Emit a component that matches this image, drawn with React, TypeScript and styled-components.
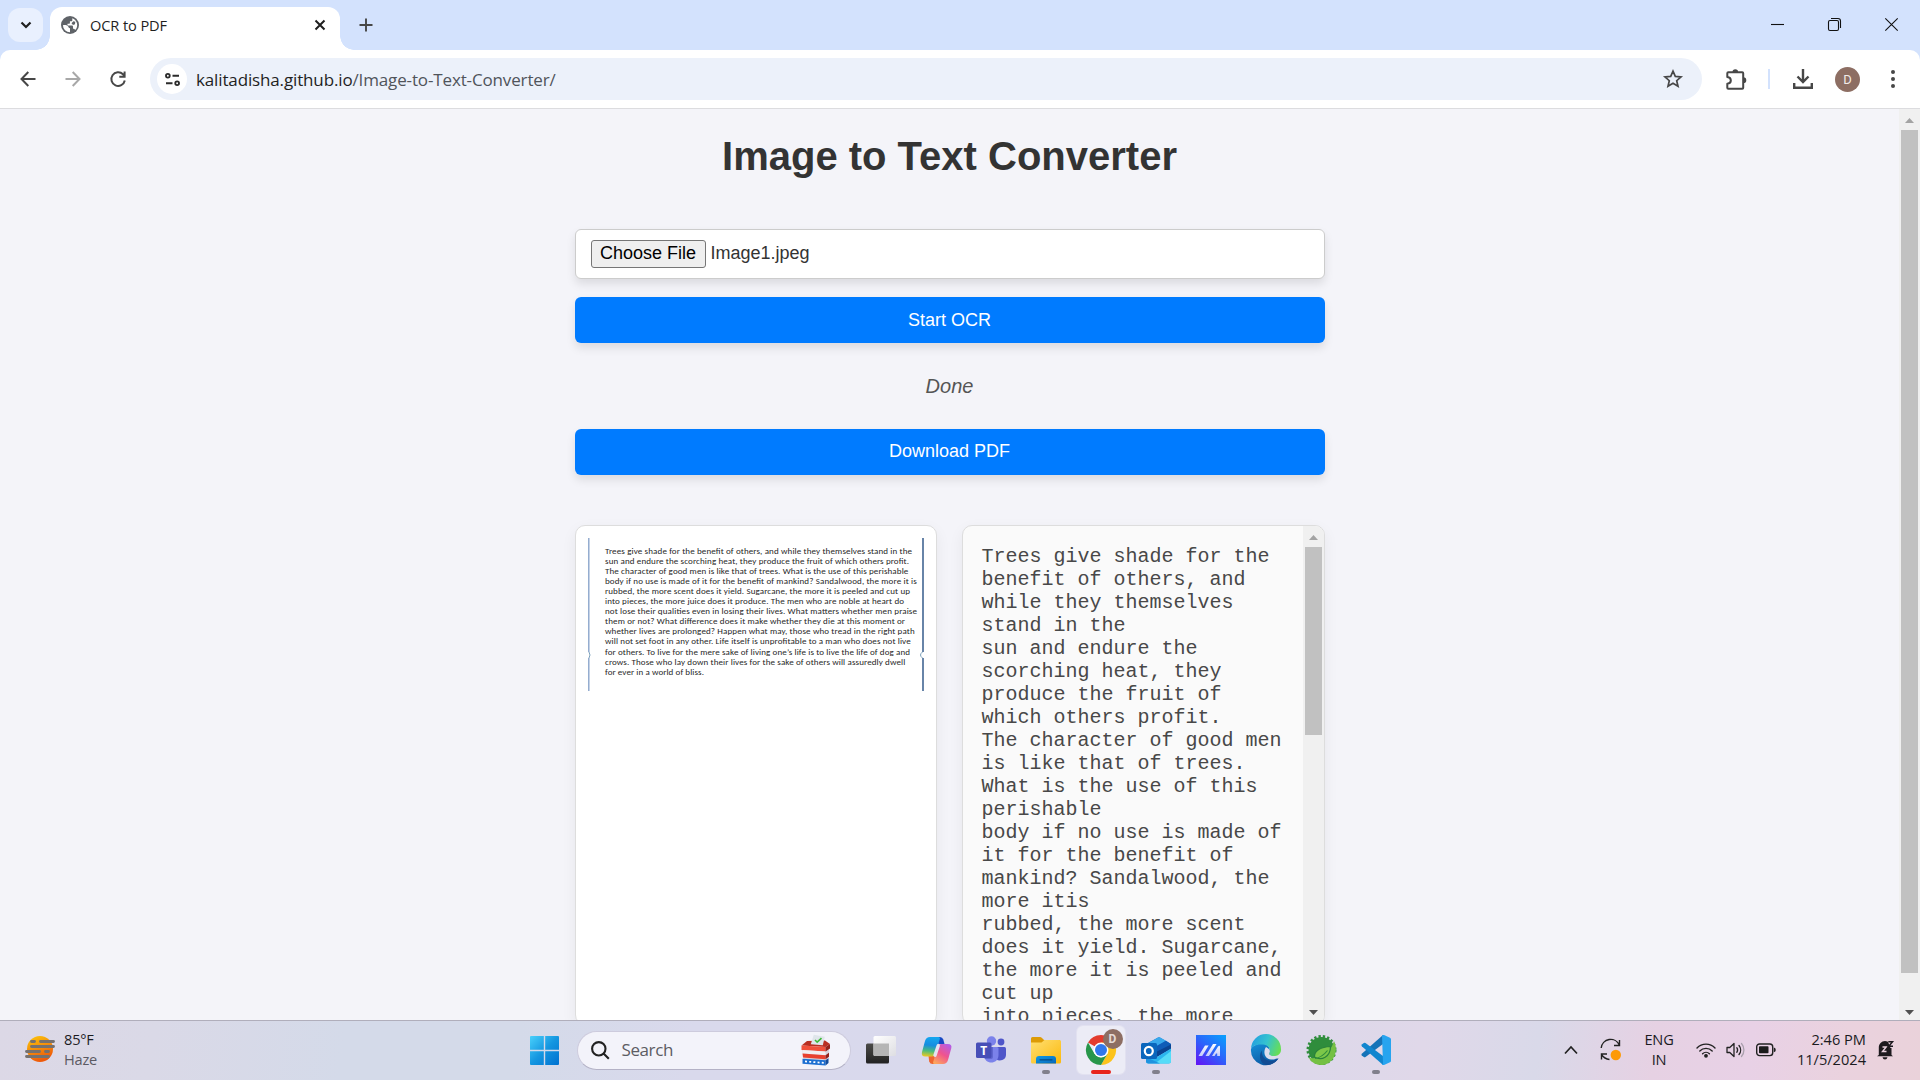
import React from 'react';
import styled, { createGlobalStyle } from 'styled-components';

const UI = `"Open Sans", "Noto Sans", sans-serif`;
const SANS = `"Liberation Sans", Arial, sans-serif`;

const GlobalStyle = createGlobalStyle`
  * { box-sizing: border-box; }
  body { margin: 0; overflow: hidden; background: #f4f4f9; }
  svg { display: block; flex: none; overflow: visible; }
`;

const Screen = styled.div`
  width: 1920px;
  height: 1080px;
  display: flex;
  flex-direction: column;
  overflow: hidden;
  background: #f4f4f9;
`;

/* ---------- browser chrome ---------- */
const TabStrip = styled.header`
  height: 50px;
  flex: none;
  display: flex;
  background: #d3e2fd;
`;
const TabSearch = styled.div`
  width: 35px;
  height: 34px;
  margin: 8px 0 0 8px;
  border-radius: 12px;
  background: #e9f0fe;
  display: grid;
  place-items: center;
`;
const Tab = styled.div`
  position: relative;
  width: 290px;
  height: 43px;
  margin: 7px 0 0 7px;
  padding: 0 12px 7px 11px;
  border-radius: 12px 12px 0 0;
  background: #fff;
  display: flex;
  align-items: center;
  &::before, &::after {
    content: '';
    position: absolute;
    bottom: 0;
    width: 14px;
    height: 14px;
  }
  &::before { left: -14px; background: radial-gradient(circle at 0 0, transparent 13.5px, #fff 14px); }
  &::after { right: -14px; background: radial-gradient(circle at 100% 0, transparent 13.5px, #fff 14px); }
`;
const TabTitle = styled.span`
  flex: 1;
  margin-left: 11px;
  font: 14.6px/20px ${UI};
  letter-spacing: -0.1px;
  color: #1f1f1f;
`;
const NewTab = styled.div`
  width: 51px;
  height: 50px;
  display: grid;
  place-items: center;
`;
const WindowButtons = styled.div`
  margin-left: auto;
  display: flex;
`;
const WindowButton = styled.div`
  width: 57px;
  height: 49px;
  display: grid;
  place-items: center;
`;
const ToolbarBack = styled.div`
  flex: none;
  background: #d3e2fd;
`;
const Toolbar = styled.nav`
  height: 59px;
  padding: 0 5px;
  display: flex;
  align-items: center;
  background: #fff;
  border-bottom: 1px solid #dcdcdf;
  border-radius: 10px 10px 0 0;
`;
const ToolSlot = styled.div`
  width: 45px;
  height: 45px;
  flex: none;
  display: grid;
  place-items: center;
`;
const Omnibox = styled.div`
  flex: 1;
  height: 42px;
  margin: 0 11.5px 0 10px;
  padding: 0 7px;
  border-radius: 21px;
  background: #ecf1fa;
  display: flex;
  align-items: center;
`;
const SiteInfo = styled.div`
  width: 30px;
  height: 30px;
  border-radius: 50%;
  background: #fff;
  display: grid;
  place-items: center;
`;
const Url = styled.span`
  flex: 1;
  margin-left: 9px;
  padding-top: 1px;
  font: 17px/24px ${UI};
  letter-spacing: -0.14px;
  color: #1f1f1f;
  span { color: #50545a; }
`;
const ToolDivider = styled.div`
  width: 2px;
  height: 20px;
  margin: 0 10px 0 9.5px;
  background: #d3e2fd;
`;
const Avatar = styled.div`
  width: 25px;
  height: 25px;
  border-radius: 50%;
  background: #8d6e63;
  color: #f2ebe8;
  font: 13px/25px Roboto, sans-serif;
  text-align: center;
`;

/* ---------- page ---------- */
const Viewport = styled.div`
  height: 911px;
  flex: none;
  display: flex;
  overflow: hidden;
`;
const Page = styled.main`
  flex: 1;
  display: flex;
  flex-direction: column;
  align-items: center;
  font-family: ${SANS};
`;
const Column = styled.div`
  width: 750px;
  display: flex;
  flex-direction: column;
`;
const Title = styled.h1`
  margin: 24px 0 50px;
  font: bold 40px/46px ${SANS};
  color: #333;
  text-align: center;
`;
const FileField = styled.div`
  height: 50px;
  margin-bottom: 18px;
  padding: 0 15px;
  display: flex;
  align-items: center;
  gap: 5px;
  background: #fff;
  border: 1px solid #ccc;
  border-radius: 6px;
  box-shadow: 0 5px 10px rgba(0, 0, 0, 0.1);
  font: 18px/20px ${SANS};
  color: #333;
`;
const ChooseFile = styled.span`
  height: 28px;
  width: 115px;
  line-height: 25px;
  text-align: center;
  background: #efefef;
  border: 1px solid #767676;
  border-radius: 3px;
  color: #000;
`;
const FileName = styled.span`
  line-height: 21px;
  padding-bottom: 1px;
`;
const PrimaryButton = styled.button`
  height: 46px;
  padding: 1px 0 0;
  border: 0;
  border-radius: 6px;
  background: #007bff;
  color: #fff;
  font: 18px/21px ${SANS};
  box-shadow: 0 5px 10px rgba(0, 0, 0, 0.1);
`;
const DownloadButton = styled(PrimaryButton)`
  padding: 0 0 1px;
`;
const Status = styled.p`
  margin: 31px 0;
  font: italic 20px/24px ${SANS};
  color: #555;
  text-align: center;
`;
const Panels = styled.section`
  margin-top: 50px;
  display: flex;
  justify-content: space-between;
`;
const Panel = styled.div<{ $bg: string; $w: number }>`
  width: ${p => p.$w}px;
  height: 500px;
  display: flex;
  overflow: hidden;
  background: ${p => p.$bg};
  border: 1px solid #ddd;
  border-radius: 10px;
  box-shadow: 0 5px 15px rgba(0, 0, 0, 0.06);
`;
const Picture = styled.div`
  padding: 12px;
`;
const OcrText = styled.pre`
  flex: 1;
  margin: 0;
  padding: 19px 0 0 19px;
  font: 20px/23px "Liberation Mono", monospace;
  color: #484848;
`;
const Bar = styled.div<{ $w: number; $h: number }>`
  width: ${p => p.$w}px;
  height: ${p => p.$h}px;
  flex: none;
  display: flex;
  flex-direction: column;
  align-items: center;
  background: #f0f0f0;
`;
const ArrowBox = styled.div<{ $end?: boolean }>`
  height: 21px;
  display: grid;
  place-items: center;
  margin-top: ${p => (p.$end ? 'auto' : '0')};
  padding-top: 2px;
`;
const Thumb = styled.div<{ $h: number }>`
  width: 17px;
  height: ${p => p.$h}px;
  background: #c1c1c1;
`;

/* ---------- taskbar ---------- */
const Taskbar = styled.footer`
  height: 60px;
  flex: none;
  display: flex;
  align-items: center;
  padding-bottom: 1px;
  border-top: 1px solid #b0aebb;
  background: linear-gradient(97deg, #dcd8e6 0%, #dad9e7 8%, #d4dae9 18%, #d4dae9 27%, #d9d9ec 36%, #d9d9ed 58%, #ddd8ea 68%, #e0d8e9 74%, #d9d9e9 80%, #e6d1e3 86%, #e8d1e6 91%, #ead2de 96%, #ead2da 100%);
  font: 14.6px/20px ${UI};
  color: #1b1b1f;
`;
const Weather = styled.div`
  width: 526px;
  padding-left: 25px;
  display: flex;
  align-items: center;
  gap: 9px;
`;
const Stack = styled.div<{ $align?: string; $gap?: string }>`
  display: flex;
  flex-direction: column;
  padding-bottom: 2px;
  text-align: ${p => p.$align || 'left'};
  letter-spacing: ${p => p.$gap || '-0.2px'};
  white-space: nowrap;
`;
const Muted = styled.span`
  color: #5b5a63;
`;
const StartSlot = styled.div`
  width: 50.5px;
  padding-left: 4px;
`;
const SearchBox = styled.div`
  width: 274px;
  height: 39px;
  padding: 0 19px 0 13px;
  display: flex;
  align-items: center;
  background: #f3f3fa;
  border: 1px solid #cdcbdd;
  border-bottom-color: #b4b2c6;
  border-radius: 20px;
`;
const SearchLabel = styled.span`
  flex: 1;
  margin-left: 12px;
  font: 17px/22px ${UI};
  letter-spacing: -0.4px;
  color: #5c5c63;
`;
const Apps = styled.div`
  margin-left: 3px;
  display: flex;
`;
const AppSlot = styled.div`
  width: 55px;
  height: 58px;
  display: grid;
  place-items: center;
  position: relative;
`;
const AppTile = styled.div<{ $active?: boolean }>`
  width: 48px;
  height: 48px;
  border-radius: 6px;
  display: grid;
  place-items: center;
  background: ${p => (p.$active ? '#ececf6' : 'transparent')};
  box-shadow: ${p => (p.$active ? '0 0 0 1px #e2e1f0' : 'none')};
`;
const Indicator = styled.div<{ $active?: boolean }>`
  position: absolute;
  bottom: 5px;
  left: 50%;
  transform: translateX(-50%);
  width: ${p => (p.$active ? 20 : 8)}px;
  height: 4px;
  border-radius: 2px;
  background: ${p => (p.$active ? '#e8251c' : '#81808c')};
`;
const ProfileBadge = styled.div`
  position: absolute;
  left: 29px;
  top: 8px;
  width: 20px;
  height: 20px;
  border-radius: 50%;
  background: #8d6e63;
  color: #e4d9d5;
  font: bold 12px/20px Roboto, sans-serif;
  text-align: center;
`;
const Tray = styled.div`
  margin-left: auto;
  padding-right: 25px;
  display: flex;
  align-items: center;
`;
const TrayItem = styled.div<{ $w: number }>`
  width: ${p => p.$w}px;
  display: flex;
  justify-content: center;
`;
const Clock = styled.div`
  width: 83px;
  padding-right: 2px;
  display: flex;
  justify-content: flex-end;
`;
const BellSlot = styled.div`
  width: 27px;
  padding-left: 9px;
`;

const imageLines: [string, number][] = [
  ['Trees give shade for the benefit of others, and while they themselves stand in the', 307],
  ['sun and endure the scorching heat, they produce the fruit of which others profit.', 304],
  ['The character of good men is like that of trees. What is the use of this perishable', 303.3],
  ['body if no use is made of it for the benefit of mankind? Sandalwood, the more it is', 311.7],
  ['rubbed, the more scent does it yield. Sugarcane, the more it is peeled and cut up', 305],
  ['into pieces, the more juice does it produce. The men who are noble at heart do', 299],
  ['not lose their qualities even in losing their lives. What matters whether men praise', 312],
  ['them or not? What difference does it make whether they die at this moment or', 300],
  ['whether lives are prolonged? Happen what may, those who tread in the right path', 309.7],
  ['will not set foot in any other. Life itself is unprofitable to a man who does not live', 305.7],
  ['for others. To live for the mere sake of living one’s life is to live the life of dog and', 305],
  ['crows. Those who lay down their lives for the sake of others will assuredly dwell', 300.3],
  ['for ever in a world of bliss.', 99],
];

const ocr = `Trees give shade for the
benefit of others, and
while they themselves
stand in the
sun and endure the
scorching heat, they
produce the fruit of
which others profit.
The character of good men
is like that of trees.
What is the use of this
perishable
body if no use is made of
it for the benefit of
mankind? Sandalwood, the
more itis
rubbed, the more scent
does it yield. Sugarcane,
the more it is peeled and
cut up
into pieces, the more`;

const SourceImage = () => (
  <svg width="336" height="154" viewBox="0 0 336 154">
    <path d="M.8 0v114M.8 120v33" stroke="#8aa5cb" strokeWidth="1.4" />
    <path d="M335 0v114M335 120v33" stroke="#57779f" strokeWidth="1.8" />
    <path d="M1 114q2 3 0 6M334.500 114q-4 3 0 6" fill="none" stroke="#7ba0bb" strokeWidth="1" />
    <g fontFamily="Carlito, Lato, sans-serif" fontSize="9" fill="#262626">
      {imageLines.map(([t, w], i) => (
        <text key={i} x="17" y={16.2 + i * 10.03} textLength={w}>{t}</text>
      ))}
    </g>
  </svg>
);

const Arrow = ({ down, color }: { down?: boolean; color: string }) => (
  <svg width="9" height="5" viewBox={down ? '0 -2 9 5' : '0 0 9 5'}><path d={down ? 'M0 0h9L4.500 5z' : 'M0 5h9L4.500 0z'} fill={color} /></svg>
);

const Stroke = ({ size, d, color = '#474747', w = 2 }: { size: number; d: string; color?: string; w?: number }) => (
  <svg width={size} height={size} viewBox={`0 0 ${size} ${size}`} fill="none" stroke={color} strokeWidth={w}><path d={d} /></svg>
);

const Globe = () => (
  <svg width="18" height="18" viewBox="0 0 18 18">
    <circle cx="9" cy="9" r="9" fill="#5f6368" />
    <path d="M1.900 9.200C4 8.800 5.800 9 7 10.200c.9 1 .6 2 2 2.100v3.900A7.200 7.200 0 0 1 1.900 9.200z" fill="#fff" />
    <path d="M11.300 2.200A7.200 7.200 0 0 1 14.200 14c-.4-1-1.200-1.300-2.200-1.300V10.800c0-.9-.5-1.300-1.300-1.300H6.500V7.700h1.400c.7 0 1-.4 1-1V5.200h1.400c.7 0 1-.4 1-1z" fill="#fff" />
    <path d="M12.300 5.300l2 .5-.3 2.500-2 .7-1.500-1.800z" fill="#5f6368" />
  </svg>
);

const Puzzle = () => (
  <svg width="24" height="24" viewBox="0 0 24 24">
    <path d="M4.800 5.200h13.400q1 0 1 1v14.500q0 1-1 1H4.300q-1 0-1-1v-3.900c4.700-.6 4.700-6.100 0-6.700V6.200q0-1 1-1z" fill="none" stroke="#474747" strokeWidth="2" strokeLinejoin="round" />
    <path d="M8.500 5a2.800 2.800 0 0 1 5.600 0zM19.400 10.300a2.900 2.900 0 0 1 0 5.800z" fill="#474747" />
  </svg>
);

const Haze = () => (
  <svg width="30" height="28" viewBox="0 0 30 28">
    <defs><linearGradient id="hz" x1="0" y1="0" x2=".4" y2="1"><stop offset="0" stopColor="#fccb0a" /><stop offset="1" stopColor="#ee5a0b" /></linearGradient></defs>
    <circle cx="15" cy="13" r="13" fill="url(#hz)" />
    <path d="M6.500 5.500h3M15.500 5.500h13M6.500 10.500h22M1.500 15.500h13M20.500 15.500h3M1.500 20.500h22" stroke="#76716f" strokeWidth="2.900" strokeLinecap="round" />
  </svg>
);

const Windows = () => (
  <svg width="29" height="29" viewBox="0 0 29 29">
    <defs><linearGradient id="wn" x1="0" y1="0" x2="1" y2="1"><stop offset="0" stopColor="#49d0fb" /><stop offset=".5" stopColor="#1496e0" /><stop offset="1" stopColor="#0071d0" /></linearGradient></defs>
    <path d="M1 0h12.800v13.800H0V1q0-1 1-1zM15.200 0H28q1 0 1 1v12.800H15.200zM0 15.200h13.800V29H1q-1 0-1-1zM15.200 15.200H29V28q0 1-1 1H15.200z" fill="url(#wn)" />
  </svg>
);

const BallotBox = () => (
  <svg width="30" height="32" viewBox="0 0 30 32">
    <path d="M1 13h27v8l-1 7-4 3L3 29z" fill="#d8d3da" />
    <path d="M.5 11.500L6 7l18-.5L29 10l-4.500 3z" fill="#b92f22" />
    <path d="M.5 11.500l24 1.500v4.500L.5 16z" fill="#f0503b" /><path d="M24.500 13L29 10v4.500l-4.500 3z" fill="#94221a" />
    <path d="M1.500 16l23 1.500v3.800L1.500 19.500z" fill="#f1eef1" />
    <path d="M1.500 19.500l23 1.800v4L2 23.500z" fill="#e8412f" /><path d="M24.500 21.300l3.500-2.500v4l-3.500 2.500z" fill="#94221a" />
    <path d="M1.500 24.700l23 1.600v5.200L1.500 29.700z" fill="#1c6fd1" /><path d="M24.500 26.300l3-2v4.700l-3 2.500z" fill="#124d9c" />
    <path d="M4 27.400l19 1.500" stroke="#fff" strokeWidth="1.700" strokeDasharray="2 2.200" />
    <path d="M12.800.8l11 2-2 8.400-12-1z" fill="#dfe5ea" />
    <path d="M14 6l2.200 2.200 4.300-4" fill="none" stroke="#3fb93a" strokeWidth="1.600" />
  </svg>
);

const TaskView = () => (
  <svg width="30" height="30" viewBox="0 0 30 30">
    <defs>
      <linearGradient id="tv" x1="0" y1="0" x2="0" y2="1"><stop offset="0" stopColor="#4b4b48" /><stop offset="1" stopColor="#222" /></linearGradient>
      <linearGradient id="tw" x1="0" y1="0" x2="1" y2="1"><stop offset="0" stopColor="#fff" /><stop offset="1" stopColor="#dedee2" /></linearGradient>
    </defs>
    <rect x="0" y="8.500" width="23" height="20" rx="1.500" fill="url(#tv)" />
    <rect x="7.500" y="1" width="22.500" height="20" rx="1.500" fill="url(#tw)" />
    <path d="M7.500 8.500H23V21H9q-1.500 0-1.500-1.500z" fill="#b5b5b5" />
  </svg>
);

const Copilot = () => (
  <svg width="31" height="29" viewBox="0 0 31 29">
    <defs>
      <linearGradient id="ca" x1=".3" y1="0" x2=".2" y2="1"><stop offset="0" stopColor="#15a5ee" /><stop offset=".4" stopColor="#168de0" /><stop offset=".7" stopColor="#4cbc7c" /><stop offset="1" stopColor="#f3c91c" /></linearGradient>
      <linearGradient id="cb" x1=".8" y1="0" x2=".2" y2="1"><stop offset="0" stopColor="#b55de5" /><stop offset=".5" stopColor="#f0548e" /><stop offset="1" stopColor="#fda75c" /></linearGradient>
    </defs>
    <path d="M15 1h4q2.500 0 3.300 2.500L23.500 8h-6z" fill="#1748c4" />
    <path d="M15.500 28h-4q-2.500 0-3.300-2.500L7.500 20h6z" fill="#ee6630" />
    <path d="M9 1h8.500q2 0 1.200 2.500L14 18.500q-.8 2-3 2H4.200Q0 20.500 1 16L4 5q1.200-4 5-4z" fill="url(#ca)" />
    <path d="M22 28h-8.500q-2 0-1.200-2.500L17 10.500q.8-2.500 3-2.500h6.800Q31.500 8 30.200 12.500L27 24q-1.200 4-5 4z" fill="url(#cb)" />
    <path d="M17.200 9.800L14 19.200" stroke="#e6e2f0" strokeWidth="3.400" strokeLinecap="round" />
  </svg>
);

const Teams = () => (
  <svg width="30" height="28" viewBox="0 0 30 28">
    <circle cx="25" cy="6" r="3.400" fill="#4f56c9" /><circle cx="15.500" cy="5" r="4.700" fill="#7b82ea" />
    <path d="M20 11h8.500q1.500 0 1.500 1.500v6.500a6 6 0 0 1-10 4z" fill="#4f56c9" />
    <path d="M8 11h13q1.500 0 1.500 1.500V19c0 10-14.500 10-14.500 0z" fill="#7b82ea" />
    <path d="M10 11h7v10q0 2-2 2H8.700z" fill="#5f66cf" />
    <rect x="0" y="6.500" width="15.500" height="15.500" rx="1.500" fill="#474eb7" />
    <text x="7.700" y="18.600" textAnchor="middle" fontFamily="Open Sans, sans-serif" fontWeight="bold" fontSize="12" fill="#fff">T</text>
  </svg>
);

const Folder = () => (
  <svg width="30" height="27" viewBox="0 0 30 27">
    <defs>
      <linearGradient id="fo" x1="0" y1="0" x2="1" y2="1"><stop offset="0" stopColor="#ffdf72" /><stop offset="1" stopColor="#fbb90c" /></linearGradient>
      <linearGradient id="fb" x1="0" y1="0" x2="1" y2="1"><stop offset="0" stopColor="#0f99e6" /><stop offset="1" stopColor="#0767b9" /></linearGradient>
    </defs>
    <path d="M0 1.500Q0 0 1.500 0H9q1 0 2 1l2 2h16v8H0z" fill="#dd9b06" />
    <path d="M0 5.500h10.500l3-2.500H28.500Q30 3 30 4.500V25q0 1.500-1.500 1.500h-27Q0 26.500 0 25z" fill="url(#fo)" />
    <path d="M5 26.500V22q0-3 3-3h14q3 0 3 3v4.500z" fill="url(#fb)" /><path d="M9 22.800h12" stroke="#064a86" strokeWidth="1.200" strokeLinecap="round" />
  </svg>
);

const Chrome = () => (
  <svg width="30" height="30" viewBox="0 0 30 30">
    <path d="M15 15L2 7.500a15 15 0 0 1 26 0z" fill="#e33b2e" />
    <path d="M15 7.500h13a15 15 0 0 1-13 22.500l6.500-11.200z" fill="#fcc31b" />
    <path d="M2 7.500l6.500 11.300 6.500 3.700 6.500-3.700L15 30A15 15 0 0 1 2 7.500z" fill="#27964a" />
    <circle cx="15" cy="15" r="7.500" fill="#fff" /><circle cx="15" cy="15" r="6" fill="#3078ec" />
  </svg>
);

const Outlook = () => (
  <svg width="31" height="28" viewBox="0 0 31 28">
    <path d="M5 8l12-6.500q1-.6 2 0L30 8l-7 5-9 4-9-2z" fill="#1678cf" />
    <path d="M7.500 7L17 1.600q1-.6 2 0l6 3.200L14 11z" fill="#38a8ec" />
    <path d="M14 11l11-6.200L30 8v3.500L16 20z" fill="#0f5cb8" />
    <path d="M16 15.500L30 8.500V13L16 21z" fill="#0b4391" />
    <path d="M5 17l11 4 14-8.500V25q0 2.500-2.500 2.500h-20Q5 27.500 5 25z" fill="#2bb5ee" />
    <path d="M14 27.500L30 15v10q0 2.500-2.500 2.500z" fill="#56dcf8" />
    <path d="M5 21l14 6.500H7.500Q5 27.500 5 25z" fill="#1f93df" />
    <rect x="0" y="7" width="16" height="16" rx="1.500" fill="#0a66bd" />
    <ellipse cx="7.800" cy="15" rx="4" ry="4.200" fill="none" stroke="#fff" strokeWidth="2.200" />
  </svg>
);

const Armoury = () => (
  <svg width="30" height="30" viewBox="0 0 30 30">
    <defs>
      <linearGradient id="ar" x1=".1" y1="1" x2=".9" y2="0"><stop offset="0" stopColor="#6118f5" /><stop offset=".5" stopColor="#2d62fb" /><stop offset="1" stopColor="#0b9dfd" /></linearGradient>
      <linearGradient id="as" x1="0" y1="0" x2="0" y2="1"><stop offset="0" stopColor="#fff" /><stop offset="1" stopColor="#c3cbfb" /></linearGradient>
    </defs>
    <rect width="30" height="30" fill="url(#ar)" />
    <path d="M2.500 21L9 10.500h3.600L6.200 21zM9.500 21L17 9h3.600L13 21zM16 21l6-9.500q2-1.500 2 .5V21h-2.800v-2.500H20L18.600 21z" fill="url(#as)" />
  </svg>
);

const Edge = () => (
  <svg width="30" height="30" viewBox="0 0 30 30">
    <defs>
      <linearGradient id="ea" x1="0" y1=".3" x2="1" y2=".6"><stop offset="0" stopColor="#239fe0" /><stop offset=".5" stopColor="#35c3cf" /><stop offset="1" stopColor="#68de54" /></linearGradient>
      <linearGradient id="eb" x1="0" y1="0" x2=".5" y2="1"><stop offset="0" stopColor="#1590d8" /><stop offset="1" stopColor="#0c59a4" /></linearGradient>
    </defs>
    <path d="M0 14C2 8 18 6 18.500 14L20 24l7.500-.5A15 15 0 0 1 0 14z" fill="url(#eb)" />
    <path d="M0 14A15 15 0 0 1 30 14c.4 4.500-3.200 7-7 7-4 0-5.500-1.500-4.500-3.200C20 15.500 18.500 10 12 9.500 6 9 1 11 0 14z" fill="url(#ea)" />
    <path d="M11 15.500c-1 6 4 10.500 9 10.500 3.500 0 6-1.500 7.500-2.500C25 27.500 20.500 30 15.500 30 9 29 7 20 11 15.500z" fill="#124c94" />
    <path d="M15 12c3 1.500 4.700 3.500 3.500 5.800-1 1.700.5 3.200 4.500 3.200 1 0 1.700 0 2.400-.2L24.500 24c-1.500.6-3 .7-4.500.5-6-.5-8.500-7-5-12.500z" fill="#dcdced" />
  </svg>
);

const Spring = () => (
  <svg width="30" height="30" viewBox="0 0 30 30">
    <circle cx="15.500" cy="15" r="13" fill="#2f8d3c" />
    <circle cx="15.500" cy="15" r="13.500" fill="none" stroke="#2f8d3c" strokeWidth="3" strokeDasharray="2.300 2" />
    <path d="M28 6c2.500 5 2.500 11 0 16C25 27.500 20 30 15 30 10 30 5 27 3 23 14 24 24 20 28 6z" fill="#74c043" />
    <path d="M24.500 11.500C15 12 8 15.500 8.500 22c7 4 16 0 16-10.500z" fill="#7cc748" stroke="#2a823b" strokeWidth="1.200" />
    <path d="M9 23.500q7-1 12.500-8" fill="none" stroke="#2f8d3c" strokeWidth="1.200" />
  </svg>
);

const VsCode = () => (
  <svg width="30" height="30" viewBox="0 0 30 30">
    <path d="M22 0L.8 18.800q-.8.900 0 1.800l2 1.500q.800.500 1.700 0L22 9z" fill="#1573b8" />
    <path d="M22 30L.8 11.200q-.8-.9 0-1.800l2-1.500q.8-.5 1.700 0L22 21z" fill="#1186cf" />
    <path d="M21 .5Q22-.300 23 .1l6 2.700q1 .500 1 1.500v21.400q0 1-1 1.500L23 29.900q-1 .4-2-.4l1-.9z" fill="#27a4ef" />
  </svg>
);

const Wifi = () => (
  <svg width="20" height="16" viewBox="0 0 20 16" fill="none" stroke="#222" strokeWidth="1.400" strokeLinecap="round">
    <path d="M1 6a12.500 12.500 0 0 1 18 0M3.800 9a8.700 8.700 0 0 1 12.400 0M6.600 11.700a4.900 4.900 0 0 1 6.800 0" /><circle cx="10" cy="13.800" r="1.200" fill="#222" />
  </svg>
);
const Volume = () => (
  <svg width="20" height="16" viewBox="0 0 20 16" fill="none" stroke="#222" strokeWidth="1.300" strokeLinecap="round" strokeLinejoin="round">
    <path d="M1 5.500h2.800L8 1.500v13l-4.200-4H1zM10.800 5.700a4 4 0 0 1 0 4.600M13 3.500a7 7 0 0 1 0 9" /><path d="M15.500 1.500a10 10 0 0 1 0 13" stroke="#aaa0ad" />
  </svg>
);
const Battery = () => (
  <svg width="20" height="14" viewBox="0 0 20 14">
    <rect x=".7" y="1" width="16" height="11.600" rx="2.800" fill="none" stroke="#222" strokeWidth="1.400" /><rect x="3" y="3.300" width="9.500" height="7" rx=".8" fill="#1b1b1b" /><path d="M17.800 4.500q2 .5 2 2.400t-2 2.300z" fill="#222" />
  </svg>
);
const Sync = () => (
  <svg width="22" height="22" viewBox="0 0 22 22" fill="none" stroke="#222" strokeWidth="1.400">
    <path d="M1.200 9A9.500 9.500 0 0 1 19.300 6M19.500 1v5.500H14M1.500 20.500V15H7M1.500 15.500q3 4.500 8 5" /><circle cx="15.800" cy="16" r="5.200" fill="#fd9a08" stroke="none" />
  </svg>
);
const Bell = () => (
  <svg width="17" height="20" viewBox="0 0 17 20">
    <path d="M1.800 15V7.500C1.800 4 4.500 1 8 1s6.500 3 6.500 6.500V15l1.500 1.200H0zM5.500 17.300h5Q10 19.500 8 19.500t-2.500-2.200z" fill="#1d1a1e" />
    <path d="M5.500 7h3.700l-3.700 4.500h4" fill="none" stroke="#ead2de" strokeWidth="1.400" />
    <path d="M10.500.5H17V8h-3.500z" fill="#ead2de" /><path d="M11.300 1.800h4.200L11.800 6.300h4.200" fill="none" stroke="#1d1a1e" strokeWidth="1.500" />
  </svg>
);

const apps: { icon: React.ReactNode; running?: boolean; active?: boolean }[] = [
  { icon: <TaskView /> }, { icon: <Copilot /> }, { icon: <Teams /> }, { icon: <Folder />, running: true },
  { icon: <Chrome />, running: true, active: true }, { icon: <Outlook />, running: true }, { icon: <Armoury /> },
  { icon: <Edge /> }, { icon: <Spring /> }, { icon: <VsCode />, running: true },
];

export default function App() {
  return (
    <Screen>
      <GlobalStyle />
      <TabStrip>
        <TabSearch><Stroke size={12} d="M1.500 3.500L6 8l4.500-4.500" color="#1f1f1f" w={2.2} /></TabSearch>
        <Tab>
          <Globe />
          <TabTitle>OCR to PDF</TabTitle>
          <Stroke size={16} d="M3.500 3.500l9 9M12.500 3.500l-9 9" color="#1f1f1f" w={2} />
        </Tab>
        <NewTab><Stroke size={14} d="M7 .5v13M.5 7h13" w={1.9} /></NewTab>
        <WindowButtons>
          <WindowButton><Stroke size={13} d="M0 6.500h13" color="#111" w={1.1} /></WindowButton>
          <WindowButton>
            <svg width="13" height="13" viewBox="0 0 13 13" fill="none" stroke="#111" strokeWidth="1.100">
              <rect x=".5" y="2.500" width="10" height="10" rx="1.500" /><path d="M3 .5h7q2.500 0 2.500 2.500v7" />
            </svg>
          </WindowButton>
          <WindowButton><Stroke size={13} d="M.3.3l12.400 12.400M12.700.3L.3 12.700" color="#111" w={1.1} /></WindowButton>
        </WindowButtons>
      </TabStrip>
      <ToolbarBack>
        <Toolbar>
          <ToolSlot><Stroke size={16} d="M15.500 8H2M8.300 1L1.500 8l6.800 7" /></ToolSlot>
          <ToolSlot><Stroke size={16} d="M.5 8H14M7.700 1l6.800 7-6.800 7" color="#a8a8a8" /></ToolSlot>
          <ToolSlot><Stroke size={16} d="M14.800 9.500A6.800 6.800 0 1 1 13 3.300L15 5.500M14.600.5v5.300H9.300" /></ToolSlot>
          <Omnibox>
            <SiteInfo>
              <svg width="15" height="13" viewBox="0 0 16 14" fill="none" stroke="#2b2b2b" strokeWidth="2">
                <circle cx="3" cy="3" r="2" /><path d="M8 3h7M1 11h7" /><circle cx="13" cy="11" r="2" />
              </svg>
            </SiteInfo>
            <Url>kalitadisha.github.io<span>/Image-to-Text-Converter/</span></Url>
            <ToolSlot>
              <Stroke size={20} d="M10 2.200l2.300 5.200 5.700.5-4.300 3.800 1.300 5.600-5-3-5 3 1.300-5.600L2 7.900l5.700-.5z" w={1.7} />
            </ToolSlot>
          </Omnibox>
          <ToolSlot><Puzzle /></ToolSlot>
          <ToolDivider />
          <ToolSlot><Stroke size={20} d="M10 0v13M4.500 7.500L10 13l5.500-5.500M1.200 14v4.800h17.600V14" w={2.4} /></ToolSlot>
          <ToolSlot><Avatar>D</Avatar></ToolSlot>
          <ToolSlot>
            <svg width="4" height="18" viewBox="0 0 4 18" fill="#474747"><circle cx="2" cy="2" r="2" /><circle cx="2" cy="9" r="2" /><circle cx="2" cy="16" r="2" /></svg>
          </ToolSlot>
        </Toolbar>
      </ToolbarBack>
      <Viewport>
        <Page>
          <Column>
            <Title>Image to Text Converter</Title>
            <FileField><ChooseFile>Choose File</ChooseFile><FileName>Image1.jpeg</FileName></FileField>
            <PrimaryButton>Start OCR</PrimaryButton>
            <Status>Done</Status>
            <DownloadButton>Download PDF</DownloadButton>
            <Panels>
              <Panel $bg="#fff" $w={362}><Picture><SourceImage /></Picture></Panel>
              <Panel $bg="#fafafa" $w={363}>
                <OcrText>{ocr}</OcrText>
                <Bar $w={21} $h={494}>
                  <ArrowBox><Arrow color="#a3a3a3" /></ArrowBox>
                  <Thumb $h={188} />
                  <ArrowBox $end><Arrow down color="#505050" /></ArrowBox>
                </Bar>
              </Panel>
            </Panels>
          </Column>
        </Page>
        <Bar $w={21} $h={911}>
          <ArrowBox><Arrow color="#a3a3a3" /></ArrowBox>
          <Thumb $h={843} />
          <ArrowBox $end><Arrow color="#505050" down /></ArrowBox>
        </Bar>
      </Viewport>
      <Taskbar>
        <Weather>
          <Haze />
          <Stack><span>85°F</span><Muted>Haze</Muted></Stack>
        </Weather>
        <StartSlot><Windows /></StartSlot>
        <SearchBox>
          <Stroke size={19} d="M14.500 7.800a6.700 6.700 0 1 1-13.400 0a6.700 6.700 0 1 1 13.400 0M12.800 12.800l5 5" color="#222" w={2.1} />
          <SearchLabel>Search</SearchLabel>
          <BallotBox />
        </SearchBox>
        <Apps>
          {apps.map((a, i) => (
            <AppSlot key={i}>
              <AppTile $active={a.active}>{a.icon}</AppTile>
              {a.active && <ProfileBadge>D</ProfileBadge>}
              {a.running && <Indicator $active={a.active} />}
            </AppSlot>
          ))}
        </Apps>
        <Tray>
          <TrayItem $w={40}><Stroke size={14} d="M1 10.500l6-6.500 6 6.500" color="#222" w={1.7} /></TrayItem>
          <TrayItem $w={40}><Sync /></TrayItem>
          <TrayItem $w={56}><Stack $align="center"><span>ENG</span><span>IN</span></Stack></TrayItem>
          <TrayItem $w={38}><Wifi /></TrayItem>
          <TrayItem $w={22}><Volume /></TrayItem>
          <TrayItem $w={38}><Battery /></TrayItem>
          <Clock><Stack $align="right" $gap="0"><span>2:46 PM</span><span>11/5/2024</span></Stack></Clock>
          <BellSlot><Bell /></BellSlot>
        </Tray>
      </Taskbar>
    </Screen>
  );
}
